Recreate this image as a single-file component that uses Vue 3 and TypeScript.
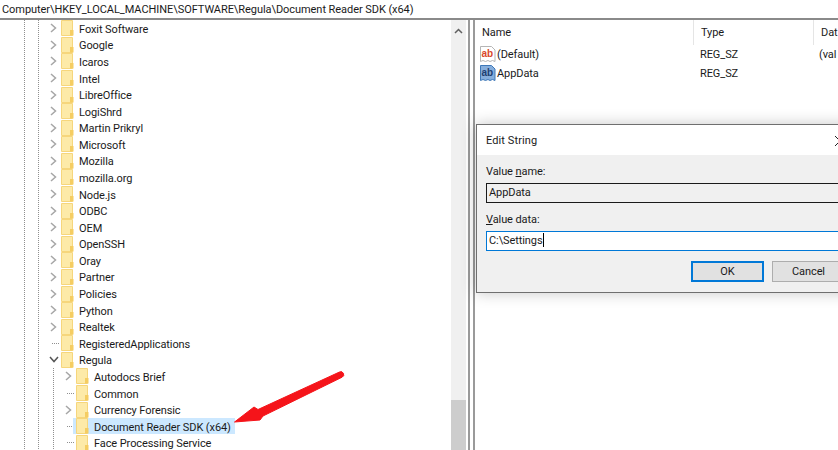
<script setup lang="ts">
const upper = [
  { t: 'Foxit Software', c: true }, { t: 'Google', c: true }, { t: 'Icaros', c: true }, { t: 'Intel', c: true },
  { t: 'LibreOffice', c: true }, { t: 'LogiShrd', c: true }, { t: 'Martin Prikryl', c: true }, { t: 'Microsoft', c: true },
  { t: 'Mozilla', c: true }, { t: 'mozilla.org', c: true }, { t: 'Node.js', c: true }, { t: 'ODBC', c: true },
  { t: 'OEM', c: true }, { t: 'OpenSSH', c: true }, { t: 'Oray', c: true }, { t: 'Partner', c: true },
  { t: 'Policies', c: true }, { t: 'Python', c: true }, { t: 'Realtek', c: true }, { t: 'RegisteredApplications', c: false },
]
const lower = [
  { t: 'Autodocs Brief', c: true, s: false }, { t: 'Common', c: false, s: false }, { t: 'Currency Forensic', c: true, s: false },
  { t: 'Document Reader SDK (x64)', c: false, s: true }, { t: 'Face Processing Service', c: false, s: false },
]
</script>

<template>
  <div class="screen">
    <div class="address">Computer\HKEY_LOCAL_MACHINE\SOFTWARE\Regula\Document Reader SDK (x64)</div>
    <div class="panes">
      <div class="tree">
        <div v-for="r in upper" :key="r.t" class="row lvl1">
          <span class="twisty">
            <svg v-if="r.c" width="9" height="10" viewBox="0 0 9 10"><path d="M2 1l4.500 4L2 9" fill="none" stroke="#a6a6a6" stroke-width="1.500"/></svg>
            <span v-else class="dots"></span>
          </span>
          <svg class="folder" width="13" height="16" viewBox="0 0 13 16"><path d="M.5.5h11v15H.5z" fill="#fdeaa8" stroke="#f6d67c"/><path d="M9 10h3.500v5.500H9z" fill="#f5cd62"/></svg>
          <span class="label">{{ r.t }}</span>
        </div>
        <div class="row lvl1">
          <span class="twisty">
            <svg width="10" height="9" viewBox="0 0 10 9"><path d="M1 2l4 4.500L9 2" fill="none" stroke="#555" stroke-width="1.500"/></svg>
          </span>
          <svg class="folder" width="13" height="16" viewBox="0 0 13 16"><path d="M.5.5h11v15H.5z" fill="#fdeaa8" stroke="#f6d67c"/><path d="M9 10h3.500v5.500H9z" fill="#f5cd62"/></svg>
          <span class="label">Regula</span>
        </div>
        <div v-for="r in lower" :key="r.t" class="row lvl2">
          <span class="twisty">
            <svg v-if="r.c" width="9" height="10" viewBox="0 0 9 10"><path d="M2 1l4.500 4L2 9" fill="none" stroke="#a6a6a6" stroke-width="1.500"/></svg>
            <span v-else class="dots"></span>
          </span>
          <span class="item" :class="{ selected: r.s }">
            <svg class="folder" width="13" height="16" viewBox="0 0 13 16"><path d="M.5.5h11v15H.5z" fill="#fdeaa8" stroke="#f6d67c"/><path d="M9 10h3.500v5.500H9z" fill="#f5cd62"/></svg>
            <span class="label">{{ r.t }}</span>
          </span>
        </div>
      </div>
      <div class="scrollbar">
        <svg class="up" width="9" height="7" viewBox="0 0 9 7"><path d="M1 5l3.500-3.500L8 5" fill="none" stroke="#606060" stroke-width="1.500"/></svg>
        <div class="thumb"></div>
      </div>
      <div class="splitter"></div>
      <div class="values">
        <div class="head">
          <span class="col c1">Name</span><span class="col c2">Type</span><span class="col c3">Dat</span>
        </div>
        <div class="vrow">
          <svg class="ico" width="16" height="17" viewBox="0 0 16 17">
            <path d="M.5.500h11l3.500 3.500v11.500l-2.500-1-2.500 1-2-1-2.500 1-2.500-1-2.500 1z" fill="#fff" stroke="#b5b5b5"/>
            <text x="1.500" y="11" class="ab red">ab</text>
          </svg>
          <span class="v1">(Default)</span><span class="v2">REG_SZ</span><span class="v3">(val</span>
        </div>
        <div class="vrow">
          <svg class="ico" width="16" height="17" viewBox="0 0 16 17">
            <path d="M.5.500h11l3.500 3.500v11.500l-2.500-1-2.500 1-2-1-2.500 1-2.500-1-2.500 1z" fill="#86aedc" stroke="#3e78b8"/>
            <text x="1.500" y="11" class="ab navy">ab</text>
          </svg>
          <span class="v1">AppData</span><span class="v2">REG_SZ</span>
        </div>
        <div class="dialog">
          <div class="title">
            <span>Edit String</span>
            <svg class="close" width="10" height="10" viewBox="0 0 10 10"><path d="M0 0l10 10M10 0L0 10" stroke="#222" stroke-width="1"/></svg>
          </div>
          <div class="body">
            <div class="lbl">Value <u>n</u>ame:</div>
            <div class="field ro">AppData</div>
            <div class="lbl second"><u>V</u>alue data:</div>
            <div class="field active">C:\Settings<i class="caret"></i></div>
            <div class="buttons">
              <span class="btn ok">OK</span>
              <span class="btn">Cancel</span>
            </div>
          </div>
        </div>
      </div>
    </div>
    <svg class="arrow" width="120" height="60" viewBox="0 0 120 60">
      <path d="M4.500 52L24 37l4 2.500L109.500 2a2.900 2.900 0 0 1 2.600 5.200L33 46 30 50z" fill="#f5141a" stroke="#f5141a" stroke-width="1" stroke-linejoin="round"/>
    </svg>
  </div>
</template>

<style scoped>
.screen {
  position: relative;
  width: 838px;
  height: 450px;
  overflow: hidden;
  background: #fff;
  color: #1a1a1a;
  font-family: Roboto, "Liberation Sans", sans-serif;
  font-size: 11px;
  letter-spacing: -0.09px;
}
.address {
  height: 18px;
  line-height: 19px;
  padding-left: 2px;
  border-bottom: 2px solid #8a8a8a;
  white-space: nowrap;
  letter-spacing: -0.06px;
}
.panes {
  display: flex;
  height: 430px;
}
.tree {
  width: 451px;
  flex: none;
  background-image:
    repeating-linear-gradient(to bottom, #8f8f8f 0 1px, transparent 1px 2px),
    repeating-linear-gradient(to bottom, #8f8f8f 0 1px, transparent 1px 2px),
    repeating-linear-gradient(to bottom, #8f8f8f 0 1px, transparent 1px 2px);
  background-size: 1px 100%, 1px 100%, 1px 82px;
  background-position: 24px 0, 38px 0, 53px 100%;
  background-repeat: no-repeat;
}
.row {
  display: flex;
  align-items: center;
  height: 16.58px;
  white-space: nowrap;
}
.lvl1 { padding-left: 46px; }
.lvl2 { padding-left: 61px; }
.twisty {
  display: flex;
  align-items: center;
  justify-content: center;
  width: 15px;
  height: 100%;
  flex: none;
}
.dots {
  width: 8px;
  height: 1px;
  margin-left: 5px;
  background: repeating-linear-gradient(to right, #8f8f8f 0 1px, transparent 1px 2px);
}
.folder {
  flex: none;
}
.label {
  margin-left: 5px;
  padding-top: 2px;
}
.item {
  display: flex;
  align-items: center;
  height: 100%;
}
.selected {
  background: #cce8ff;
  margin-left: -3px;
  padding: 0 4px 0 3px;
}
.scrollbar {
  position: relative;
  width: 15px;
  flex: none;
  background: #f0f0f0;
}
.up {
  display: block;
  margin: 8px 0 0 3px;
}
.thumb {
  position: absolute;
  left: 0;
  right: 0;
  top: 380px;
  bottom: 0;
  background: #cdcdcd;
}
.splitter {
  width: 7px;
  margin-left: 2px;
  flex: none;
  border-left: 2px solid #9a9a9a;
  border-right: 2px solid #9a9a9a;
  box-sizing: border-box;
  height: 430px;
}
.values {
  position: relative;
  flex: 1;
  min-width: 0;
}
.head {
  display: flex;
  height: 25px;
  align-items: center;
}
.col {
  height: 25px;
  line-height: 26px;
  flex: none;
  padding-left: 7px;
  border-right: 1px solid #e5e5e5;
  box-sizing: border-box;
}
.c1 { width: 219px; }
.c2 { width: 120px; }
.c3 { border-right: 0; }
.vrow {
  display: flex;
  align-items: center;
  height: 19px;
  margin-left: 5px;
  white-space: nowrap;
  line-height: 20px;
}
.ico { flex: none; }
.ab {
  font-family: "Liberation Sans", sans-serif;
  font-weight: 700;
  font-size: 10px;
}
.red { fill: #d9482b; }
.navy { fill: #1f3f70; }
.v1 { width: 204px; flex: none; padding-left: 1px; box-sizing: border-box; }
.v2 { width: 119px; flex: none; }
.dialog {
  position: absolute;
  left: 1px;
  top: 104px;
  width: 400px;
  height: 169px;
  border: 1px solid #6f6f6f;
  box-sizing: border-box;
  background: #f0f0f0;
  box-shadow: 0 0 14px rgba(0, 0, 0, 0.22);
}
.title {
  position: relative;
  height: 30px;
  line-height: 31px;
  padding-left: 9px;
  background: #fff;
  letter-spacing: 0.1px;
}
.close {
  position: absolute;
  left: 358px;
  top: 11px;
}
.body {
  padding: 8px 0 0 9px;
}
.lbl {
  height: 16px;
  line-height: 17px;
  margin-bottom: 4px;
}
.second {
  margin-top: 8px;
}
.field {
  height: 20px;
  line-height: 18px;
  padding-left: 2px;
  border: 1px solid #1a1a1a;
  box-sizing: border-box;
  width: 400px;
}
.ro { background: #f0f0f0; }
.active {
  background: #fff;
  border-color: #0078d7;
}
.caret {
  display: inline-block;
  width: 1px;
  height: 14px;
  background: #000;
  vertical-align: -3px;
}
.buttons {
  display: flex;
  gap: 8px;
  margin: 10px 0 0 205px;
}
.btn {
  width: 73px;
  height: 21px;
  line-height: 20px;
  flex: none;
  text-align: center;
  box-sizing: border-box;
  background: #e1e1e1;
  border: 1px solid #adadad;
}
.ok {
  border: 2px solid #0078d7;
  line-height: 18px;
}
.arrow {
  position: absolute;
  left: 230px;
  top: 370px;
}
</style>
